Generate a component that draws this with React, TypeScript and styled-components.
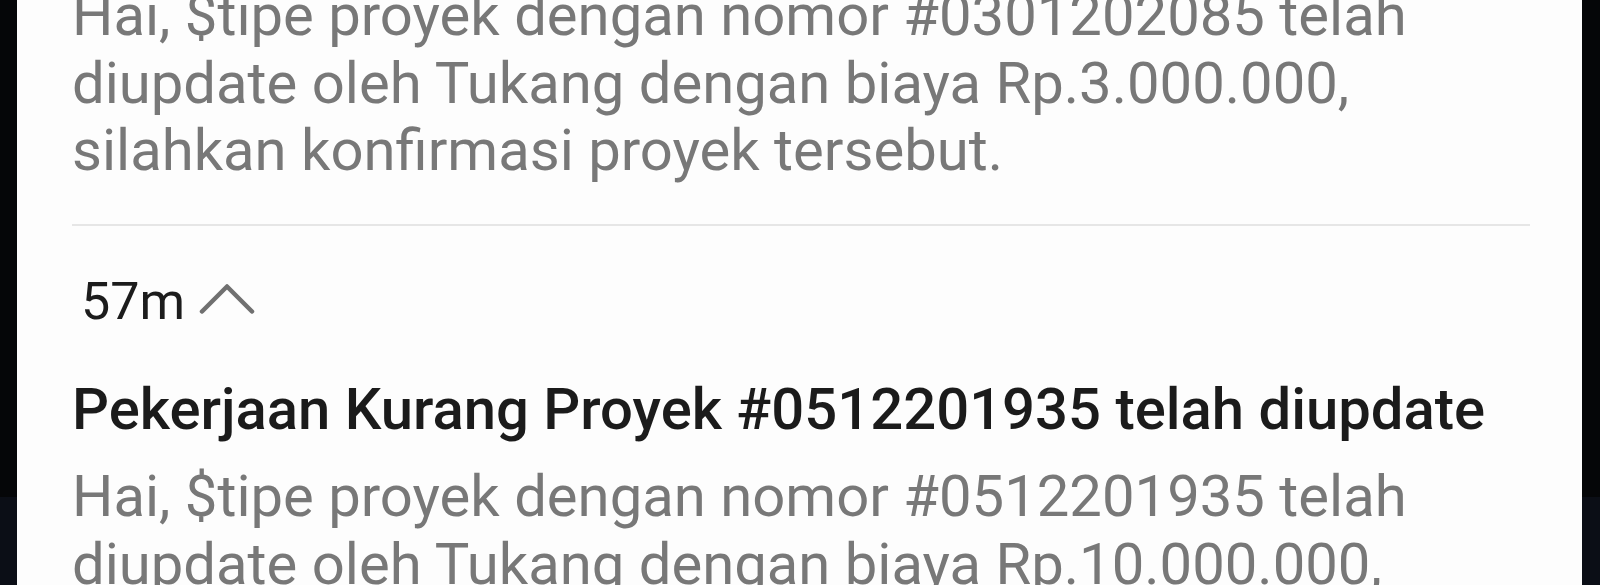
import { createGlobalStyle, styled } from 'styled-components';

type Notification = {
	id: string;
	time?: string;
	title?: string;
	body: string[];
};

const notifications: Notification[] = [
	{
		id: '0301202085',
		body: [
			'Hai, $tipe proyek dengan nomor #0301202085 telah',
			'diupdate oleh Tukang dengan biaya Rp.3.000.000,',
			'silahkan konfirmasi proyek tersebut.',
		],
	},
	{
		id: '0512201935',
		time: '57m',
		title: 'Pekerjaan Kurang Proyek #0512201935 telah diupdate',
		body: [
			'Hai, $tipe proyek dengan nomor #0512201935 telah',
			'diupdate oleh Tukang dengan biaya Rp.10.000.000,',
			'silahkan konfirmasi proyek tersebut.',
		],
	},
];

function ChevronUp() {
	return (
		<svg width="56" height="32" viewBox="0 0 56 32" fill="none">
			<path d="M3 28.5 L28 3.5 L53 28.5" stroke="#707070" strokeWidth="4.5" strokeLinecap="round" strokeLinejoin="round" />
		</svg>
	);
}

function App() {
	return (
		<>
			<GlobalStyle />
			<Screen>
				<Bezel />
				<Card>
					<List>
						{notifications.map((item, index) => (
							<Entry key={item.id}>
								{index > 0 && <Divider />}
								{item.time && (
									<TimeRow>
										<span>{item.time}</span>
										<ChevronUp />
									</TimeRow>
								)}
								{item.title && <Title>{item.title}</Title>}
								<Body>
									{item.body.map((line) => (
										<p key={line}>{line}</p>
									))}
								</Body>
							</Entry>
						))}
					</List>
				</Card>
				<Bezel $right />
			</Screen>
		</>
	);
}

const GlobalStyle = createGlobalStyle`
	html, body {
		margin: 0;
		padding: 0;
		background: #050608;
	}
	* {
		box-sizing: border-box;
	}
`;

const Screen = styled.div`
	width: 1600px;
	height: 585px;
	display: flex;
	overflow: hidden;
	font-family: Roboto, 'Liberation Sans', sans-serif;
`;

const Bezel = styled.div<{ $right?: boolean }>`
	width: ${({ $right }) => ($right ? '18px' : '17px')};
	flex-shrink: 0;
	background: linear-gradient(to bottom, #050608 0, #050608 497px, #0b0e16 497px, #0b0e16 100%);
`;

const Card = styled.div`
	flex: 1;
	background: #fdfdfd;
	overflow: hidden;
	padding: 0 52px 0 55px;
`;

const List = styled.div`
	margin-top: -38px;
	display: flex;
	flex-direction: column;
`;

const Entry = styled.div`
	display: flex;
	flex-direction: column;
`;

const Divider = styled.div`
	height: 2px;
	background: #e6e6e6;
	margin-top: 39px;
`;

const TimeRow = styled.div`
	display: flex;
	align-items: center;
	gap: 14px;
	margin: 44px 0 0 9px;
	font-size: 52px;
	line-height: 64px;
	color: #1c1c1c;

	svg {
		margin-top: -6px;
	}
`;

const Title = styled.h3`
	margin: 42px 0 0;
	font-size: 58px;
	line-height: 67.5px;
	font-weight: 500;
	color: #1b1b1b;
	white-space: nowrap;
`;

const Body = styled.div`
	margin-top: 20px;
	font-size: 58px;
	line-height: 67.5px;
	color: #787878;

	p {
		margin: 0;
		white-space: nowrap;
	}
`;

export default App;
